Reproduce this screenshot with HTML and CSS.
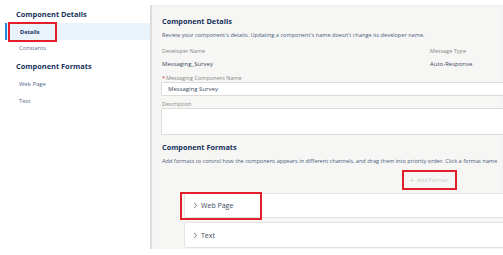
FILE: index.html
```html
<!DOCTYPE html>
<html>
<head>
<meta charset="utf-8">
<link rel="stylesheet" href="styles.css">
</head>
<body>
<div class="page">
  <aside class="sidebar">
    <div class="side-heading">Component Details</div>
    <div class="side-item active"><span class="callout">Details</span></div>
    <div class="side-item">Constants</div>
    <div class="side-heading second">Component Formats</div>
    <div class="side-item first">Web Page</div>
    <div class="side-item">Text</div>
  </aside>
  <main class="content">
    <section class="panel">
      <h2 class="heading">Component Details</h2>
      <p class="desc">Review your component's details. Updating a component's name doesn't change its developer name.</p>
      <div class="fields">
        <div class="field dev">
          <div class="label">Developer Name</div>
          <div class="value">Messaging_Survey</div>
        </div>
        <div class="field">
          <div class="label">Message Type</div>
          <div class="value">Auto-Response</div>
        </div>
      </div>
      <div class="label req"><span class="star">*</span>Messaging Component Name</div>
      <div class="input">Messaging Survey</div>
      <div class="label desc-label">Description</div>
      <div class="textarea"></div>
      <h2 class="heading second">Component Formats</h2>
      <p class="desc clip">Add formats to control how the component appears in different channels, and drag them into priority order. Click a format name</p>
      <button class="add-btn"><span class="plus">+</span>Add Format</button>
      <div class="card first">
        <span class="mark"></span>
        <svg class="chev" width="5" height="7" viewBox="0 0 5 7"><polyline points="1,0.8 3.8,3.5 1,6.2" fill="none" stroke="#706e6b" stroke-width="0.9"/></svg>
        <span class="card-title">Web Page</span>
      </div>
      <div class="card second">
        <svg class="chev" width="5" height="7" viewBox="0 0 5 7"><polyline points="1,0.8 3.8,3.5 1,6.2" fill="none" stroke="#706e6b" stroke-width="0.9"/></svg>
        <span class="card-title">Text</span>
      </div>
    </section>
  </main>
</div>
</body>
</html>
```

FILE: styles.css
```css
* { box-sizing: border-box; }
html, body {
  margin: 0;
  padding: 0;
  background: #ffffff;
}
body {
  width: 503px;
  height: 255px;
  overflow: hidden;
  font-family: "Open Sans", "Noto Sans", "Liberation Sans", sans-serif;
  color: #3e4a5e;
}
.page {
  display: flex;
  width: 503px;
  height: 255px;
}
.sidebar {
  width: 150px;
  flex: none;
  padding-top: 9px;
  display: flex;
  flex-direction: column;
}
.side-heading {
  padding-left: 16px;
  font-size: 7.4px;
  line-height: 10px;
  font-weight: 700;
  color: #16325c;
}
.side-heading.second {
  margin-top: 4px;
}
.side-item {
  height: 17px;
  line-height: 17px;
  padding-left: 19px;
  font-size: 5.8px;
  color: #54698d;
}
.side-item.first {
  margin-top: 4.5px;
}
.side-item.active {
  margin-top: 4px;
  margin-left: 5px;
  padding-left: 1px;
  border-left: 2px solid #1b8fe8;
  background: #e9f3fc;
  display: flex;
  align-items: center;
}
.callout {
  display: block;
  height: 20px;
  line-height: 16px;
  padding: 0 16px 0 10px;
  border: 2px solid #e3202a;
  font-weight: 700;
  color: #16325c;
  font-size: 5.6px;
}
.content {
  flex: 1;
  min-width: 0;
  padding-top: 5px;
}
.panel {
  height: 244px;
  border-left: 2px solid #dcdcdc;
  background: #f6f6f5;
  box-shadow: inset 0 1px 1px #ececec;
  padding: 11px 0 0 10px;
  display: flex;
  flex-direction: column;
  align-items: flex-start;
  overflow: hidden;
}
.heading {
  margin: 0;
  font-size: 7.3px;
  line-height: 10px;
  font-weight: 700;
  color: #16325c;
  white-space: nowrap;
}
.heading.second {
  margin-top: 7px;
}
.desc {
  margin: 4.5px 0 0 0;
  font-size: 5.6px;
  line-height: 8px;
  color: #4a5c7a;
  white-space: nowrap;
}
.desc.clip {
  margin-top: 5px;
  max-width: 341px;
  overflow: hidden;
}
.fields {
  display: flex;
  margin-top: 8.5px;
}
.field.dev {
  width: 268px;
}
.label {
  font-size: 5.5px;
  line-height: 8px;
  color: #8a8886;
  white-space: nowrap;
}
.value {
  margin-top: 4.5px;
  font-size: 6px;
  line-height: 9px;
  color: #3e4a5e;
  white-space: nowrap;
}
.label.req {
  margin-top: 5px;
}
.star {
  color: #c23934;
  margin-right: 1px;
}
.input {
  margin-top: 0.5px;
  margin-left: -1px;
  width: 400px;
  flex: none;
  height: 14px;
  line-height: 12px;
  padding-left: 6px;
  background: #ffffff;
  border: 1px solid #dddbda;
  border-radius: 1px;
  font-size: 6px;
  color: #3e4a5e;
}
.label.desc-label {
  margin-top: 4px;
}
.textarea {
  margin-top: 0;
  margin-left: -1px;
  width: 400px;
  flex: none;
  height: 27px;
  background: #ffffff;
  border: 1px solid #dddbda;
  border-radius: 1px;
}
.add-btn {
  margin: 5px 0 0 240px;
  width: 55px;
  height: 20px;
  flex: none;
  padding: 0 0 0 6px;
  border: 2px solid #e3202a;
  background: transparent;
  font-family: inherit;
  font-size: 5.6px;
  color: #c9c7c5;
  display: flex;
  align-items: center;
  text-align: left;
}
.plus {
  font-size: 7px;
  margin-right: 3px;
}
.card {
  position: relative;
  margin-left: 22px;
  width: 400px;
  flex: none;
  background: #ffffff;
  border: 1px solid #e4e3e2;
  border-radius: 2px;
  display: flex;
  align-items: center;
  padding-left: 8px;
}
.card.first {
  margin-top: 3px;
  height: 25px;
}
.card.second {
  margin-top: 4px;
  height: 26px;
}
.chev {
  display: block;
  margin-right: 3px;
}
.card-title {
  font-size: 7px;
  color: #3e4a5e;
}
.mark {
  position: absolute;
  left: -5px;
  top: -2px;
  width: 82px;
  height: 28px;
  border: 2px solid #e3202a;
}
```
